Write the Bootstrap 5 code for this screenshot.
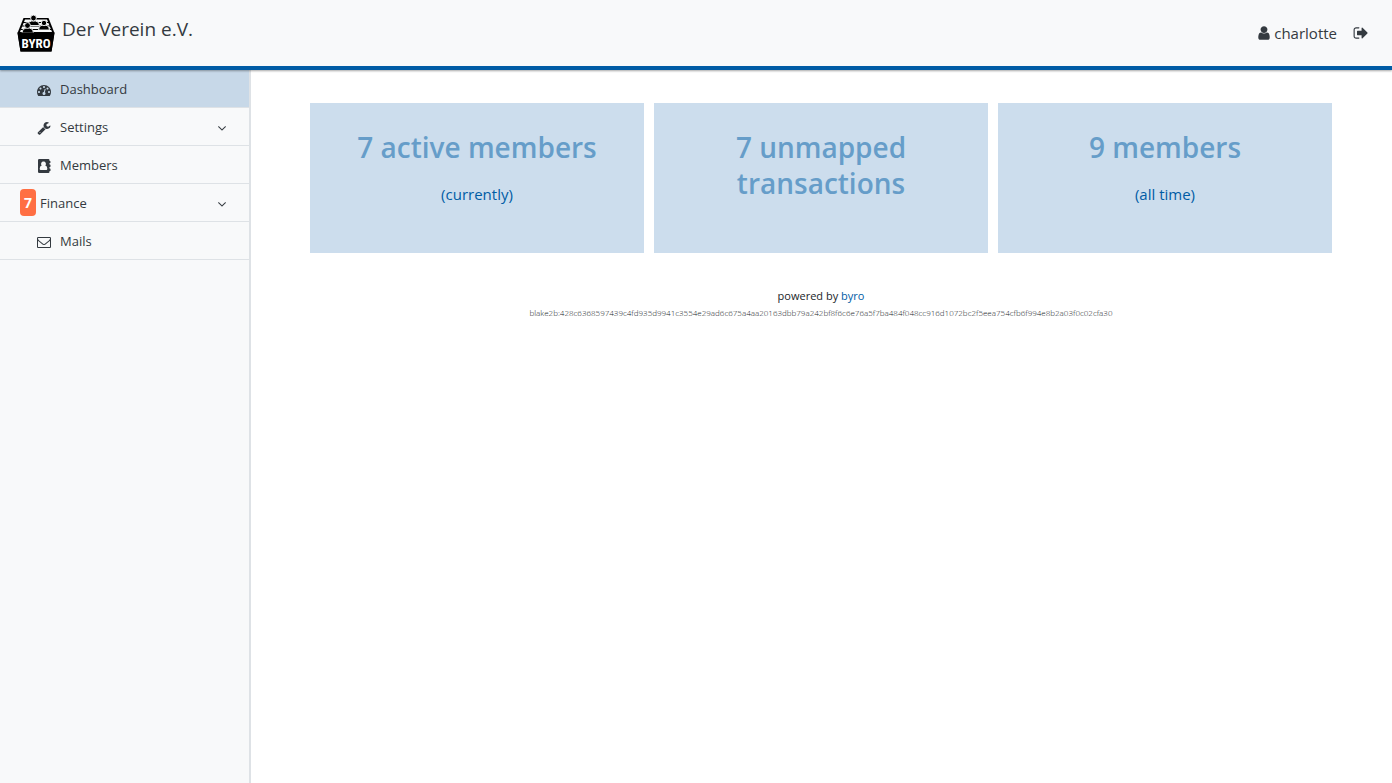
<!DOCTYPE html>
<html lang="en">
<head>
<meta charset="utf-8">
<meta name="viewport" content="width=device-width, initial-scale=1">
<title>Der Verein e.V.</title>
<link href="https://cdn.jsdelivr.net/npm/bootstrap@5.3.0/dist/css/bootstrap.min.css" rel="stylesheet">
<style>
  body { font-family: "Open Sans", "Noto Sans", sans-serif; font-size: 15px; color: #212529; background: #fff; }
  a { color: #005ca5; text-decoration: none; }
  .fa-glyph { width: 14px; height: 14px; fill: currentColor; flex: none; }
  .topbar { height: 70px; background: #f8f9fa; border-bottom: 4px solid #005ca5; box-shadow: 0 1px 2px rgba(0,0,0,.35); position: relative; z-index: 1; padding: 0 23px 0 16px; }
  .topbar .fa-glyph { width: 16px; height: 16px; }
  .topbar, .topbar a, .side-menu a, .side-menu button { color: #343a40; }
  .brand-link { gap: 6px; }
  .user-link { gap: 2px; }
  .brand-name { font-size: 19px; line-height: 30px; padding-bottom: 8px; }
  .side-menu { width: 251px; background: #f8f9fa; border-right: 2px solid #dee2e6; font-size: 13px; flex: none; }
  .side-item { height: 38px; width: 100%; background: none; border: 0; border-bottom: 1px solid #dee2e6; padding: 2px 20px 0 37px; gap: 9px; }
  .side-item.current { background: #c7d8e8; }
  .side-item.counted { padding-left: 20px; gap: 4px; }
  .counter { background: #ff6f43; color: #fff; font-size: 14px; font-weight: 700; border-radius: 4px; width: 16px; line-height: 27px; margin-bottom: 2px; text-align: center; }
  .content-area { padding: 33px 60px 33px 59px; min-width: 0; }
  .tiles { gap: 10px; }
  .tile { flex: 1 1 0; min-height: 150px; background: #ccdded; padding: 26px 40px; text-align: center; }
  .tile h2 { font-size: 28px; line-height: 36px; font-weight: 600; color: #669dc9; margin: 0 0 17px; }
  .tile p { margin: 0; line-height: 24px; }
  .page-foot { margin-top: 34px; font-size: 11px; line-height: 18px; }
  .build-hash { font-size: 8px; font-weight: 350; line-height: 16px; overflow-wrap: anywhere; }
</style>
</head>
<body class="d-flex flex-column min-vh-100">
<header class="topbar d-flex align-items-center">
  <a href="#" class="brand-link d-flex align-items-center">
    <svg width="40" height="40" viewBox="0 0 40 40" role="img" aria-label="byro">
      <path d="M7.500 5H32.500L38.500 20L35.500 38.500H4.500L1.500 20Z" fill="#000"/>
      <path d="M9 6.500H31L36 19H4Z" fill="#f8f9fa"/>
      <path d="M7 9.500H33M6 13H34M5 16.500H35" stroke="#000" stroke-width="1.200"/>
      <g fill="#000" stroke="#f8f9fa" stroke-width=".9">
        <path d="M11.500 12.500q0-4 4-4.500h4q4 .5 4 4.500z"/><circle cx="17.500" cy="5" r="2.900"/>
        <path d="M6 20q0-4.500 4-5h3.500q4 .5 4 5z"/><circle cx="11.500" cy="12.500" r="2.900"/>
        <path d="M22.500 17q0-4.500 4-5h3q4 .5 4 5z"/><circle cx="28" cy="10" r="2.700"/>
      </g>
      <path d="M1.500 19.500H38.500L35.500 38.500H4.500Z" fill="#000"/>
      <text x="20" y="35" text-anchor="middle" font-family="'Liberation Sans Narrow','Roboto Condensed','Liberation Sans',sans-serif" font-weight="700" font-size="13" fill="#fff">BYRO</text>
    </svg>
    <span class="brand-name">Der Verein e.V.</span>
  </a>
  <div class="ms-auto d-flex align-items-center gap-3">
    <a href="#" class="user-link d-flex align-items-center"><svg class="fa-glyph" viewBox="0 0 1792 1792"><path d="M1536 1399q0 109-62.500 187t-150.500 78h-854q-88 0-150.500-78t-62.500-187q0-85 8.500-160.500t31.500-152 58.500-131 94-89 134.500-34.500q131 128 313 128t313-128q76 0 134.500 34.500t94 89 58.500 131 31.500 152 8.500 160.500zm-256-887q0 159-112.500 271.500t-271.500 112.500-271.500-112.500-112.500-271.500 112.500-271.500 271.500-112.500 271.500 112.500 112.500 271.500z"/></svg>charlotte</a>
    <a href="#" class="d-flex" aria-label="Log out"><svg class="fa-glyph" viewBox="0 0 1792 1792"><path d="M704 1440q0 4 1 20t.5 26.500-3 23.500-10 19.500-20.500 6.500h-320q-119 0-203.500-84.500t-84.500-203.500v-704q0-119 84.500-203.500t203.500-84.500h320q13 0 22.500 9.500t9.500 22.500q0 4 1 20t.5 26.500-3 23.500-10 19.500-20.500 6.500h-320q-66 0-113 47t-47 113v704q0 66 47 113t113 47h312l11.500 1 11.500 3 8 5.500 7 9 2 13.500zm928-544q0 26-19 45l-544 544q-19 19-45 19t-45-19-19-45v-288h-448q-26 0-45-19t-19-45v-384q0-26 19-45t45-19h448v-288q0-26 19-45t45-19 45 19l544 544q19 19 19 45z"/></svg></a>
  </div>
</header>
<div class="d-flex flex-grow-1">
  <nav class="side-menu">
    <a href="#" class="side-item current d-flex align-items-center"><svg class="fa-glyph" viewBox="0 0 1792 1792"><path d="M384 1152q0-53-37.500-90.500t-90.500-37.500-90.500 37.500-37.500 90.500 37.500 90.500 90.500 37.500 90.500-37.500 37.500-90.500zm192-448q0-53-37.500-90.500t-90.500-37.500-90.500 37.500-37.500 90.500 37.500 90.500 90.500 37.500 90.500-37.500 37.500-90.500zm428 481l101-382q6-26-7.500-48.500t-38.500-29.500-48 6.500-30 39.500l-101 382q-60 5-107 43.500t-63 98.500q-20 77 20 146t117 89 146-20 89-117q16-60-6-117t-72-91zm660-33q0-53-37.500-90.500t-90.500-37.500-90.500 37.500-37.500 90.500 37.500 90.500 90.500 37.500 90.500-37.500 37.500-90.500zm-640-640q0-53-37.500-90.500t-90.500-37.500-90.500 37.500-37.500 90.500 37.500 90.500 90.500 37.500 90.500-37.500 37.500-90.500zm448 192q0-53-37.500-90.500t-90.500-37.500-90.500 37.500-37.500 90.500 37.500 90.500 90.500 37.500 90.500-37.500 37.500-90.500zm320 448q0 261-141 483-19 29-54 29h-1402q-35 0-54-29-141-221-141-483 0-182 71-348t191-286 286-191 348-71 348 71 286 191 191 286 71 348z"/></svg>Dashboard</a>
    <button type="button" class="side-item d-flex align-items-center"><svg class="fa-glyph" viewBox="0 0 1792 1792"><path d="M448 1472q0-26-19-45t-45-19-45 19-19 45 19 45 45 19 45-19 19-45zm644-420l-682 682q-37 37-90 37-52 0-91-37l-106-108q-38-36-38-90 0-53 38-91l681-681q39 98 114.500 173.500t173.500 114.500zm634-435q0 39-23 106-47 134-164.500 217.500t-258.500 83.500q-185 0-316.500-131.500t-131.500-316.500 131.500-316.500 316.500-131.500q58 0 121.500 16.500t107.500 46.500q16 11 16 28t-16 28l-293 169v224l193 107q5-3 79-48.500t135.500-81 70.500-35.500q15 0 23.500 10t8.500 25z"/></svg>Settings<svg class="fa-glyph ms-auto" viewBox="0 0 1792 1792"><path d="M1395 736q0 13-10 23l-466 466q-10 10-23 10t-23-10l-466-466q-10-10-10-23t10-23l50-50q10-10 23-10t23 10l393 393 393-393q10-10 23-10t23 10l50 50q10 10 10 23z"/></svg></button>
    <a href="#" class="side-item d-flex align-items-center"><svg class="fa-glyph" viewBox="0 0 14 14"><path fill-rule="evenodd" d="M2.200 0H11.300Q12.500 0 12.500 1.200V2H13Q13.500 2 13.500 2.400V3.600Q13.500 4 13 4H12.500V5.500H13Q13.500 5.500 13.500 5.900V7.600Q13.500 8 13 8H12.500V9.500H13Q13.500 9.500 13.500 9.900V11.500Q13.500 12 13 12H12.500V12.800Q12.500 14 11.300 14H2.200Q1 14 1 12.800V1.200Q1 0 2.200 0ZM6.500 2.600A2.300 2.300 0 0 0 4.700 6.500Q2.700 6.800 2.700 9.700Q2.700 10.900 3.700 10.900H9.300Q10.300 10.900 10.300 9.700Q10.300 6.800 8.300 6.500A2.300 2.300 0 0 0 6.500 2.600Z"/></svg>Members</a>
    <button type="button" class="side-item counted d-flex align-items-center"><span class="counter">7</span>Finance<svg class="fa-glyph ms-auto" viewBox="0 0 1792 1792"><path d="M1395 736q0 13-10 23l-466 466q-10 10-23 10t-23-10l-466-466q-10-10-10-23t10-23l50-50q10-10 23-10t23 10l393 393 393-393q10-10 23-10t23 10l50 50q10 10 10 23z"/></svg></button>
    <a href="#" class="side-item d-flex align-items-center"><svg class="fa-glyph" viewBox="0 0 1792 1792"><path d="M1664 1504v-768q-32 36-69 66-268 206-426 338-51 43-83 67t-86.500 48.500-102.500 24.500h-2q-48 0-102.500-24.500t-86.500-48.500-83-67q-158-132-426-338-37-30-69-66v768q0 13 9.500 22.500t22.500 9.500h1472q13 0 22.500-9.500t9.500-22.500zm0-1051v-24.500l-.5-13-3-12.500-5.500-9-9-7.500-14-2.500h-1472q-13 0-22.500 9.500t-9.500 22.500q0 168 147 284 193 152 401 317 6 5 35 29.500t46 37.500 44.500 31.500 50.500 27.500 43 9h2q20 0 43-9t50.500-27.500 44.500-31.500 46-37.500 35-29.500q208-165 401-317 54-43 100.500-115.500t46.500-131.500zm128-37v1088q0 66-47 113t-113 47h-1472q-66 0-113-47t-47-113v-1088q0-66 47-113t113-47h1472q66 0 113 47t47 113z"/></svg>Mails</a>
  </nav>
  <main class="content-area flex-grow-1">
    <div class="tiles d-flex">
      <a href="#" class="tile"><h2>7 active members</h2><p>(currently)</p></a>
      <a href="#" class="tile"><h2>7 unmapped transactions</h2></a>
      <a href="#" class="tile"><h2>9 members</h2><p>(all time)</p></a>
    </div>
    <footer class="page-foot text-center">
      <div>powered by <a href="#">byro</a></div>
      <div class="build-hash">blake2b:428c6368597439c4fd935d9941c3554e29ad6c675a4aa20163dbb79a242bf8f6c6e76a5f7ba484f048cc916d1072bc2f5eea754cfb6f994e8b2a03f0c02cfa30</div>
    </footer>
  </main>
</div>
<script src="https://cdn.jsdelivr.net/npm/bootstrap@5.3.0/dist/js/bootstrap.bundle.min.js"></script>
</body>
</html>
